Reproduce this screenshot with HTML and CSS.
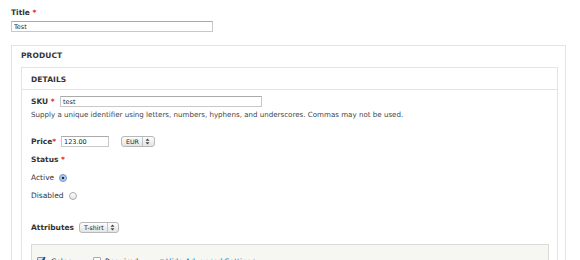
FILE: index.html
```html
<!DOCTYPE html>
<html lang="en">
<head>
    <meta charset="UTF-8">
    <title>Product</title>
    <link rel="stylesheet" href="styles.css">
</head>
<body>
    <div class="form-item title-item">
        <label class="field-label">Title <span class="req">*</span></label>
        <input type="text" class="text-input title-input" value="Test">
    </div>

    <div class="fieldset outer">
        <div class="legend">PRODUCT</div>
        <div class="fieldset inner">
            <div class="legend inner-legend">DETAILS</div>
            <div class="fieldset-body">
                <div class="form-item row sku-row">
                    <label class="field-label">SKU <span class="req">*</span></label>
                    <input type="text" class="text-input sku-input" value="test">
                </div>
                <div class="description">Supply a unique identifier using letters, numbers, hyphens, and underscores. Commas may not be used.</div>

                <div class="form-item row price-row">
                    <label class="field-label">Price<span class="req">*</span></label>
                    <input type="text" class="text-input price-input" value="123.00">
                    <span class="select currency">EUR<span class="arrows"><svg width="5" height="7" viewBox="0 0 5 7"><path d="M2.5 0.5 L4.5 2.8 L0.5 2.8 Z M2.5 6.5 L4.5 4.2 L0.5 4.2 Z" fill="#444"/></svg></span></span>
                </div>

                <div class="form-item status">
                    <label class="field-label">Status <span class="req">*</span></label>
                    <div class="radio-row">
                        <span>Active</span>
                        <span class="radio checked"></span>
                    </div>
                    <div class="radio-row">
                        <span>Disabled</span>
                        <span class="radio"></span>
                    </div>
                </div>

                <div class="form-item row attr-row">
                    <label class="field-label">Attributes</label>
                    <span class="select type">T-shirt<span class="arrows"><svg width="5" height="7" viewBox="0 0 5 7"><path d="M2.5 0.5 L4.5 2.8 L0.5 2.8 Z M2.5 6.5 L4.5 4.2 L0.5 4.2 Z" fill="#444"/></svg></span></span>
                </div>

                <div class="attr-box">
                    <div class="attr-line">
                        <span class="check checked"><svg width="9" height="9" viewBox="0 0 9 9"><path d="M1.5 4.5 L3.6 7 L8 1.2" stroke="#1d4f9c" stroke-width="1.8" fill="none"/></svg></span>
                        <span class="attr-name color-name">Color</span>
                        <span class="check"></span>
                        <span class="attr-name req-name">Required</span>
                        <a class="adv-link" href="#"><span class="tri">&#9660;</span>Hide Advanced Settings</a>
                    </div>
                </div>
            </div>
        </div>
    </div>
</body>
</html>
```

FILE: styles.css
```css
body {
    margin: 0;
    padding: 8px 14px 0 11px;
    font-family: "DejaVu Sans", sans-serif;
    font-size: 7.5px;
    color: #333;
    background: #fff;
    overflow: hidden;
}

.field-label {
    font-weight: bold;
    font-size: 7.5px;
    color: #333;
}
.req {
    color: #e02020;
}

.title-item .field-label {
    display: block;
    line-height: 10px;
    margin-bottom: 3px;
}
.text-input {
    box-sizing: border-box;
    height: 11px;
    padding: 0 2px;
    border: 1px solid #c8c8c8;
    border-top-color: #aaa;
    font-family: "DejaVu Sans", sans-serif;
    font-size: 6.5px;
    color: #222;
    background: #fff;
    outline: none;
}
.title-input {
    display: block;
    width: 202px;
}

.fieldset {
    border: 1px solid #e3e3e3;
}
.outer {
    margin-top: 13px;
    padding: 4px 7px 0 9px;
    height: 240px;
}
.legend {
    font-weight: bold;
    font-size: 7.5px;
    line-height: 11px;
    color: #333;
    letter-spacing: 0.1px;
}
.inner {
    margin-top: 6px;
    height: 220px;
}
.inner-legend {
    padding: 6px 9px 0 9px;
    height: 15px;
    border-bottom: 1px solid #e3e3e3;
}
.fieldset-body {
    padding: 6px 8px 0 9px;
}

.row {
    display: flex;
    align-items: center;
}
.sku-row .field-label {
    width: 29px;
}
.sku-input {
    width: 202px;
}
.description {
    margin-top: 3px;
    line-height: 10px;
    color: #444;
    font-size: 7.1px;
}

.price-row {
    margin-top: 16px;
}
.price-row .field-label {
    width: 30px;
}
.price-input {
    width: 48px;
}
.select {
    box-sizing: border-box;
    display: inline-flex;
    align-items: center;
    height: 11px;
    padding-left: 4px;
    border: 1px solid #b8b8b8;
    border-radius: 3px;
    background: linear-gradient(#fdfdfd, #e4e4e4);
    font-size: 6.3px;
    color: #222;
}
.arrows {
    display: inline-flex;
    align-items: center;
    height: 100%;
    margin-left: 3px;
    padding: 0 2px;
    border-left: 1px solid #c4c4c4;
}
.currency {
    margin-left: 12px;
    width: 34px;
}

.status {
    margin-top: 8px;
}
.status .field-label {
    display: block;
    line-height: 10px;
}
.radio-row {
    display: flex;
    align-items: center;
    gap: 5px;
    height: 11px;
    margin-top: 7px;
}
.radio-row + .radio-row {
    margin-top: 7px;
}
.radio {
    box-sizing: border-box;
    width: 8px;
    height: 8px;
    border-radius: 50%;
    border: 1px solid #aaa;
    background: linear-gradient(#fff, #e6e6e6);
}
.radio.checked {
    border-color: #6b8fc4;
    background: radial-gradient(circle, #1c2c48 0 1.2px, #a7c4ec 1.6px, #cfe0f6 100%);
}

.attr-row {
    margin-top: 21px;
}
.attr-row .field-label {
    width: 48px;
}
.type {
    width: 40px;
}

.attr-box {
    margin-top: 11px;
    height: 40px;
    border: 1px solid #dcdcd6;
    background: #f6f6f2;
}
.attr-line {
    display: flex;
    align-items: center;
    padding: 10px 0 0 5px;
    height: 12px;
    font-size: 7.5px;
}
.check {
    box-sizing: border-box;
    flex: none;
    width: 8px;
    height: 8px;
    border: 1px solid #aaa;
    border-radius: 1px;
    background: #fff;
    position: relative;
}
.check.checked {
    border-color: #6b8fc4;
    background: #dbe7f7;
}
.check svg {
    position: absolute;
    left: -1px;
    top: -2px;
}
.color-name {
    margin-left: 6px;
    width: 42px;
}
.req-name {
    margin-left: 4px;
    width: 55px;
}
.adv-link {
    color: #0071b3;
    text-decoration: none;
}
.tri {
    font-size: 5px;
    color: #222;
    margin-right: 2px;
    vertical-align: 1px;
}
```
